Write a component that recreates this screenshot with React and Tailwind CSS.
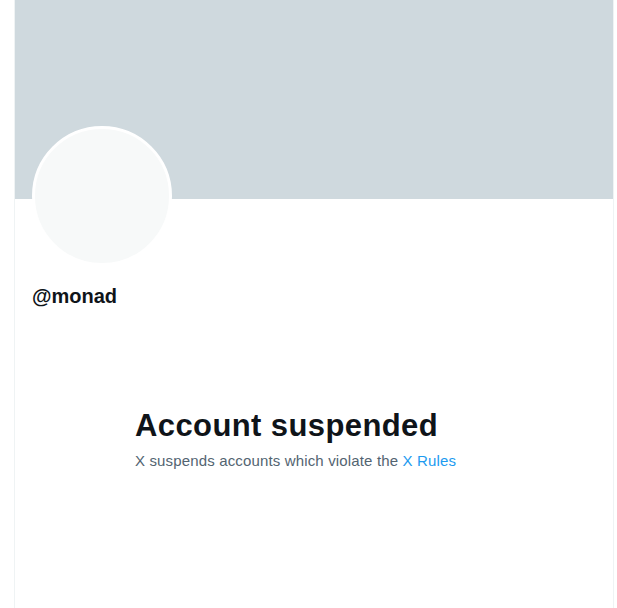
import React from "react";

// Suspended profile page
export default function App() {
  return (
    <div className="min-h-screen bg-white font-['Liberation_Sans',Arial,sans-serif] text-[#0f1419]">
      <div className="ml-[14px] w-[600px] h-[608px] border-x border-[#eff3f4]">
        {/* Banner */}
        <div className="h-[199px] bg-[#cfd9de]" />

        {/* Avatar + handle */}
        <div className="px-[17px]">
          <div className="-mt-[73px] w-[140px] h-[140px] rounded-full border-[3px] border-white bg-[#f7f9f9]" />
          <div className="mt-[18px] text-[20px] leading-[24px] font-bold">@monad</div>
        </div>

        {/* Empty state */}
        <div className="ml-[120px] mt-[100px]">
          <h1 className="text-[31px] leading-[36px] font-bold tracking-[0.4px]">Account suspended</h1>
          <p className="mt-[7px] text-[15px] leading-[20px] tracking-[0.15px] text-[#536471]">
            X suspends accounts which violate the <span className="text-[#1d9bf0]">X Rules</span>
          </p>
        </div>
      </div>
    </div>
  );
}
